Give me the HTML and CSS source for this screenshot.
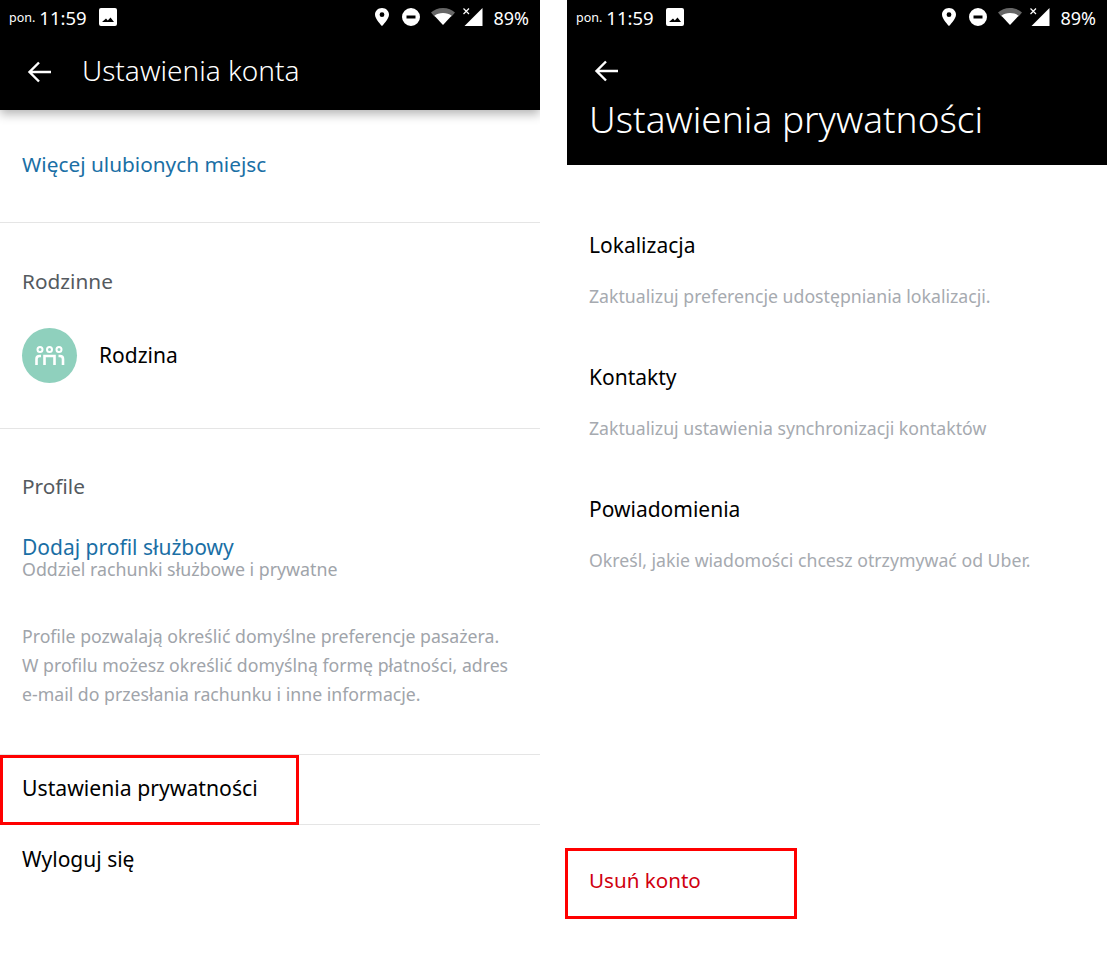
FILE: index.html
```html
<!DOCTYPE html>
<html>
<head>
    <title>Ustawienia konta</title>
    <link rel="stylesheet" href="styles.css">
</head>
<body>
    <div class="screen screen-left">
        <div class="topbar topbar-shadow">
            <div class="status">
                <span class="day">pon.</span>
                <span class="clock">11:59</span>
                <svg class="pic" width="18" height="18" viewBox="0 0 18 18"><path fill="#fff" fill-rule="evenodd" d="M2 0h14a2 2 0 0 1 2 2v14a2 2 0 0 1-2 2H2a2 2 0 0 1-2-2V2a2 2 0 0 1 2-2zM3 14h12l-3.500-4.500-2.700 3L7 10.500z"/></svg>
                <span class="spacer"></span>
                <svg class="st-pin" width="14" height="18" viewBox="0 0 14 18"><path fill="#fff" fill-rule="evenodd" d="M7 0C3 0 0 2.900 0 6.700 0 10.900 7 18 7 18s7-7.100 7-11.300C14 2.900 11 0 7 0zm0 4.300a2.400 2.400 0 1 1 0 4.800 2.400 2.400 0 0 1 0-4.800z"/></svg>
                <svg class="st-dnd" width="18" height="18" viewBox="0 0 18 18"><path fill="#fff" fill-rule="evenodd" d="M9 0a9 9 0 1 1 0 18A9 9 0 0 1 9 0zM4.500 7.600v2.800h9V7.600z"/></svg>
                <svg class="st-wifi" width="24" height="17" viewBox="0 0 24 17"><path fill="#666" d="M0 4.500C3 1.800 7 0 12 0s9 1.800 12 4.500l-3.400 3.900H3.400z"/><path fill="#fff" d="M3.400 7.800C5.600 6 8.500 5 12 5s6.400 1 8.600 2.800L12 17z"/></svg>
                <svg class="st-signal" width="20" height="18" viewBox="0 0 20 18"><path fill="#fff" d="M19.500 0v18H1.500z"/><path stroke="#fff" stroke-width="1.200" fill="none" d="M.5.500l5.500 5.500M6 .5L.5 6"/></svg>
                <span class="battery">89%</span>
            </div>
            <div class="titlebar">
                <svg class="back" width="24" height="22" viewBox="0 0 24 22"><path fill="none" stroke="#fff" stroke-width="2.400" d="M24 11H3M12 1.500L2.500 11l9.500 9.500"/></svg>
                <h1 class="title">Ustawienia konta</h1>
            </div>
        </div>

        <a class="row-link fav">Więcej ulubionych miejsc</a>

        <section class="family">
            <h2 class="section-label">Rodzinne</h2>
            <div class="family-row">
                <div class="avatar">
                    <svg width="30" height="20" viewBox="0 0 30 20">
                        <g fill="none" stroke="#fff">
                            <circle cx="5" cy="3.500" r="2.500" stroke-width="2"/>
                            <circle cx="14.500" cy="3.500" r="2.500" stroke-width="2"/>
                            <circle cx="24" cy="3.500" r="2.500" stroke-width="2"/>
                            <path stroke-width="2.600" d="M1.500 19v-6c0-2 1-3 3-3H6M9.500 19V10h10v9M28 19v-6c0-2-1-3-3-3h-1.500"/>
                        </g>
                    </svg>
                </div>
                <span class="plain">Rodzina</span>
            </div>
        </section>

        <section class="profiles">
            <h2 class="section-label">Profile</h2>
            <a class="row-link add">Dodaj profil służbowy</a>
            <p class="sub">Oddziel rachunki służbowe i prywatne</p>
            <p class="note">Profile pozwalają określić domyślne preferencje pasażera.<br>W profilu możesz określić domyślną formę płatności, adres<br>e-mail do przesłania rachunku i inne informacje.</p>
        </section>

        <div class="menu-row boxed-row">
            <span class="plain">Ustawienia prywatności</span>
            <div class="red-box box-left"></div>
        </div>
        <div class="menu-row">
            <span class="plain">Wyloguj się</span>
        </div>
    </div>

    <div class="screen">
        <div class="topbar">
            <div class="status">
                <span class="day">pon.</span>
                <span class="clock">11:59</span>
                <svg class="pic" width="18" height="18" viewBox="0 0 18 18"><path fill="#fff" fill-rule="evenodd" d="M2 0h14a2 2 0 0 1 2 2v14a2 2 0 0 1-2 2H2a2 2 0 0 1-2-2V2a2 2 0 0 1 2-2zM3 14h12l-3.500-4.500-2.700 3L7 10.500z"/></svg>
                <span class="spacer"></span>
                <svg class="st-pin" width="14" height="18" viewBox="0 0 14 18"><path fill="#fff" fill-rule="evenodd" d="M7 0C3 0 0 2.900 0 6.700 0 10.900 7 18 7 18s7-7.100 7-11.300C14 2.900 11 0 7 0zm0 4.300a2.400 2.400 0 1 1 0 4.800 2.400 2.400 0 0 1 0-4.800z"/></svg>
                <svg class="st-dnd" width="18" height="18" viewBox="0 0 18 18"><path fill="#fff" fill-rule="evenodd" d="M9 0a9 9 0 1 1 0 18A9 9 0 0 1 9 0zM4.500 7.600v2.800h9V7.600z"/></svg>
                <svg class="st-wifi" width="24" height="17" viewBox="0 0 24 17"><path fill="#666" d="M0 4.500C3 1.800 7 0 12 0s9 1.800 12 4.500l-3.400 3.900H3.400z"/><path fill="#fff" d="M3.400 7.800C5.600 6 8.500 5 12 5s6.400 1 8.600 2.800L12 17z"/></svg>
                <svg class="st-signal" width="20" height="18" viewBox="0 0 20 18"><path fill="#fff" d="M19.500 0v18H1.500z"/><path stroke="#fff" stroke-width="1.200" fill="none" d="M.5.500l5.500 5.500M6 .5L.5 6"/></svg>
                <span class="battery">89%</span>
            </div>
            <div class="backbar">
                <svg class="back" width="24" height="22" viewBox="0 0 24 22"><path fill="none" stroke="#fff" stroke-width="2.400" d="M24 11H3M12 1.500L2.500 11l9.500 9.500"/></svg>
            </div>
            <h1 class="big-title">Ustawienia prywatności</h1>
        </div>

        <div class="privacy-list">
            <div class="privacy-item">
                <h3 class="plain">Lokalizacja</h3>
                <p class="desc">Zaktualizuj preferencje udostępniania lokalizacji.</p>
            </div>
            <div class="privacy-item">
                <h3 class="plain">Kontakty</h3>
                <p class="desc">Zaktualizuj ustawienia synchronizacji kontaktów</p>
            </div>
            <div class="privacy-item">
                <h3 class="plain">Powiadomienia</h3>
                <p class="desc">Określ, jakie wiadomości chcesz otrzymywać od Uber.</p>
            </div>
        </div>

        <div class="delete-row">
            <span class="delete">Usuń konto</span>
            <div class="red-box box-right"></div>
        </div>
    </div>
</body>
</html>
```

FILE: styles.css
```css
body {
    margin: 0;
    background: #fff;
    font-family: "Noto Sans", sans-serif;
    display: flex;
    gap: 27px;
    height: 960px;
    overflow: hidden;
}
h1, h2, h3, p {
    margin: 0;
    font-weight: 400;
}
.screen {
    width: 540px;
    flex: none;
    display: flex;
    flex-direction: column;
}
.screen-left {
    overflow: hidden; /* keeps the bar shadow out of the gap */
}
.topbar {
    background: #000;
    color: #fff;
    flex: none;
}
.topbar-shadow {
    height: 110px;
    box-shadow: 0 4px 10px rgba(0, 0, 0, 0.3);
}
.status {
    height: 33px;
    display: flex;
    align-items: center;
    padding: 0 11px 0 9px;
}
.day {
    font-size: 12.5px;
    margin: 2px 4px 0 0;
}
.clock {
    font-size: 18.5px;
    margin: 2px 12px 0 0;
}
.spacer {
    flex: 1;
}
.st-pin {
    margin-right: 13px;
}
.st-dnd {
    margin-right: 11px;
}
.st-wifi {
    margin-right: 8px;
}
.st-signal {
    margin-right: 10px;
}
.battery {
    font-size: 18px;
    margin-top: 2px;
}
.titlebar {
    display: flex;
    align-items: center;
    height: 77px;
    padding-left: 27px;
}
.title {
    font-size: 28px;
    font-weight: 300;
    margin: 0 0 4px 31px;
}
.backbar {
    padding-left: 27px;
    display: flex;
    align-items: center;
    height: 76px;
}
.big-title {
    font-size: 37px;
    font-weight: 300;
    padding: 0 0 21px 22px;
    line-height: 50px;
    margin-top: -15px;
}
.row-link {
    color: #1a6fa5;
    font-size: 20.8px;
    display: block;
}
.fav {
    padding: 39px 0 43px 22px;
    line-height: 30px;
    border-bottom: 1px solid #e5e5e5;
}
.section-label {
    font-size: 20.8px;
    color: #555a60;
    line-height: 30px;
}
.family {
    padding: 43px 0 45px 22px;
    border-bottom: 1px solid #e5e5e5;
}
.family-row {
    display: flex;
    align-items: center;
    margin-top: 32px;
}
.family-row .plain {
    margin-bottom: 2px;
}
.avatar {
    width: 55px;
    height: 55px;
    border-radius: 50%;
    background: #8fd0bd;
    margin-right: 22px;
    display: flex;
    align-items: center;
    justify-content: center;
}
.plain {
    font-size: 21px;
    color: #000;
    line-height: 30px;
}
.profiles {
    padding: 42px 0 45px 22px;
    border-bottom: 1px solid #e5e5e5;
}
.add {
    margin-top: 34px;
    line-height: 24px;
    font-size: 21px;
}
.sub {
    font-size: 17.8px;
    color: #a0a4aa;
    line-height: 18px;
    margin-top: 1px;
}
.note {
    font-size: 17.7px;
    color: #a0a4aa;
    line-height: 29px;
    margin-top: 44px;
}
.menu-row {
    position: relative;
    height: 70px;
    box-sizing: border-box;
    padding: 0 0 2px 22px;
    display: flex;
    align-items: center;
    flex: none;
}
.boxed-row {
    border-bottom: 1px solid #e5e5e5;
    padding-bottom: 3px;
}
.boxed-row .plain {
    font-size: 21.2px;
}
.red-box {
    position: absolute;
    border: 3px solid #f00;
    box-sizing: border-box;
}
.box-left {
    left: 0;
    top: 0;
    width: 299px;
    height: 70px;
}
.privacy-list {
    padding: 65px 0 0 22px;
}
.privacy-item {
    height: 132px;
}
.desc {
    font-size: 17.7px;
    color: #a6aab0;
    margin-top: 21px;
    line-height: 30px;
}
.delete-row {
    position: relative;
    margin-top: auto;
    margin-bottom: 41px;
    height: 71px;
    box-sizing: border-box;
    padding: 0 0 7px 22px;
    display: flex;
    align-items: center;
    flex: none;
}
.delete {
    color: #d0000f;
    font-size: 20.6px;
}
.box-right {
    left: -2px;
    top: 0;
    width: 232px;
    height: 71px;
}
```
